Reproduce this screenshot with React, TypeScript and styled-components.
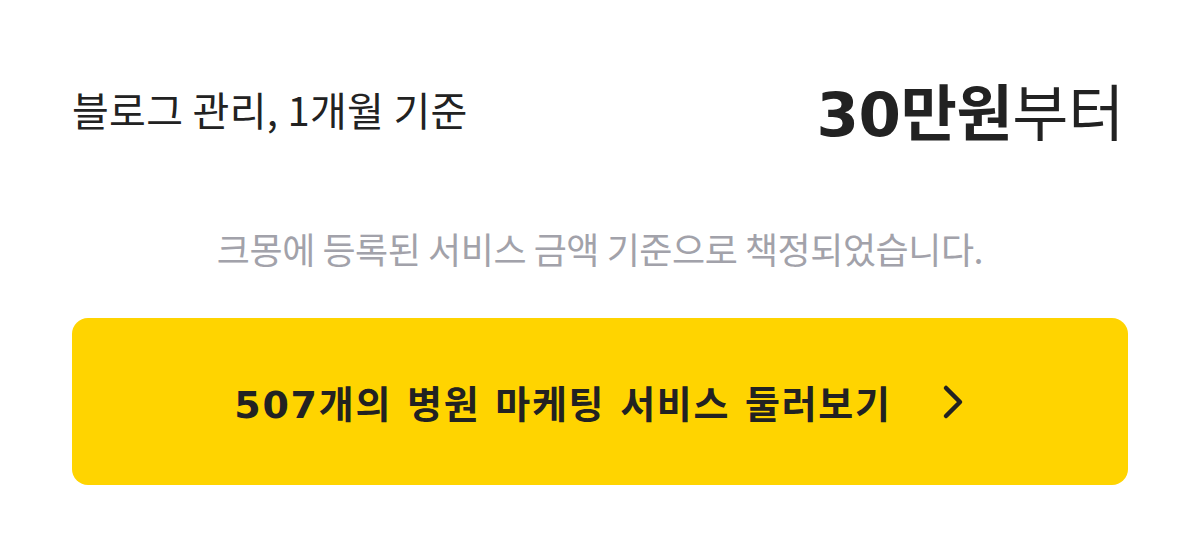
import React from "react";
import styled, { createGlobalStyle } from "styled-components";

const Global = createGlobalStyle`
  html, body { margin: 0; padding: 0; background: #ffffff; }
  body { font-family: "Noto Sans CJK KR", "Noto Sans", sans-serif; color: #222222; }
`;

const Page = styled.div`
  width: 1200px;
  height: 556px;
  box-sizing: border-box;
  padding: 69px 72px 0 72px;
  display: flex;
  flex-direction: column;
`;

const Header = styled.div`
  display: flex;
  align-items: center;
  justify-content: space-between;
  height: 80px;
`;

const Title = styled.div`
  font-size: 40px;
  font-weight: 400;
  letter-spacing: 0.3px;
  color: #222222;
`;

const Price = styled.div`
  font-family: "DejaVu Sans", "Noto Sans CJK KR", sans-serif;
  font-size: 61px;
  font-weight: 400;
  letter-spacing: -0.3px;
  color: #222222;
  padding-right: 4px;
`;

const Strong = styled.span`
  font-weight: 700;
`;

const Note = styled.div`
  margin-top: 73px;
  text-align: center;
  font-size: 36px;
  font-weight: 400;
  color: #a2a2aa;
  letter-spacing: -0.45px;
`;

const CtaButton = styled.button`
  margin-top: 44px;
  height: 167px;
  width: 100%;
  border: none;
  border-radius: 16px;
  background: #ffd400;
  display: flex;
  align-items: center;
  justify-content: center;
  gap: 48px;
  font-family: "DejaVu Sans", "Noto Sans CJK KR", sans-serif;
  font-size: 38px;
  font-weight: 700;
  letter-spacing: 1.7px;
  color: #222222;
  cursor: pointer;
`;

const Chevron = () => (
  <svg width="26" height="36" viewBox="0 0 26 36" fill="none">
    <path d="M6 4 L20 18 L6 32" stroke="#222" strokeWidth="4.5" strokeLinecap="round" strokeLinejoin="round" />
  </svg>
);

export default function App() {
  return (
    <>
      <Global />
      <Page>
        <Header>
          <Title>블로그 관리, 1개월 기준</Title>
          <Price>
            <Strong>30만원</Strong>부터
          </Price>
        </Header>
        <Note>크몽에 등록된 서비스 금액 기준으로 책정되었습니다.</Note>
        <CtaButton>
          <span>507개의 병원 마케팅 서비스 둘러보기</span>
          <Chevron />
        </CtaButton>
      </Page>
    </>
  );
}
